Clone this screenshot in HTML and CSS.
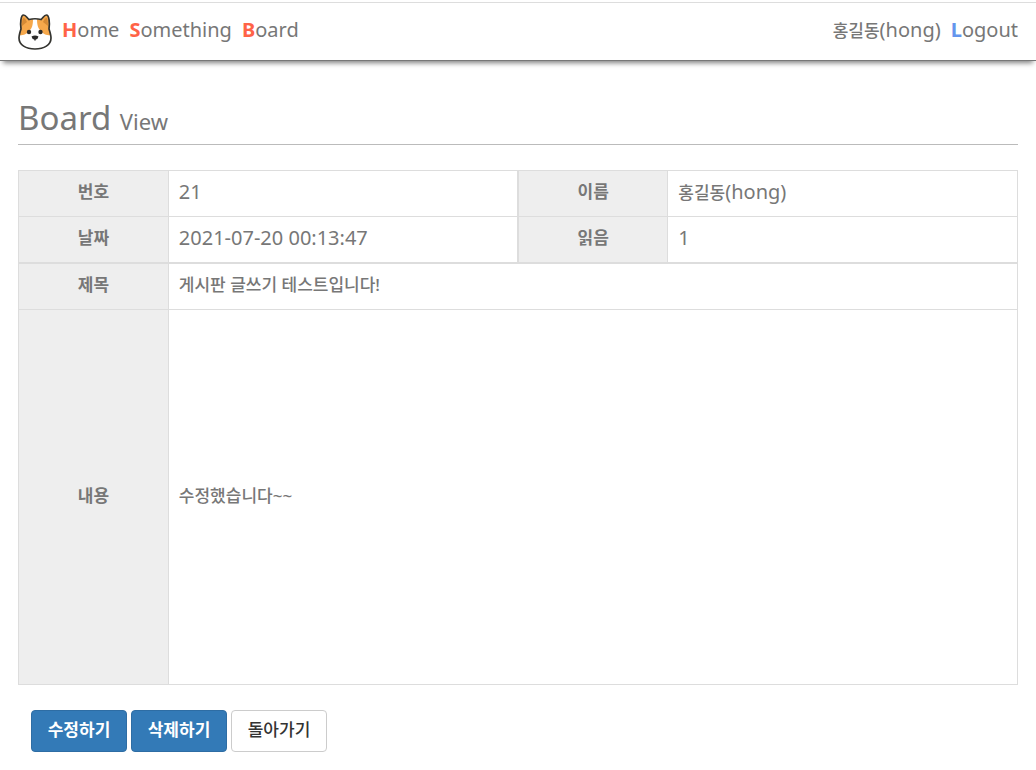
FILE: index.html
```html
<!DOCTYPE html>
<html lang="ko">
<head>
  <meta charset="utf-8">
  <meta name="viewport" content="width=device-width, initial-scale=1">
  <title>Board View</title>
  <link rel="stylesheet" href="styles.css">
</head>
<body>
  <header class="navbar">
    <nav class="nav-links">
      <a class="logo" href="#" aria-label="Main">
        <svg viewBox="0 0 34 36" width="34" height="36" aria-hidden="true">
          <path fill="#fff" d="M3 15 C2 9 3 1 5.500 1 C8 1 9 4 11 5.500 C15 4.500 19 4.500 23 5.500 C25 4 26 1 28.500 1 C31 1 32 9 31 15 C32 18 33 21 33 24 C33 31 26 35 17 35 C8 35 1 31 1 24 C1 21 2 18 3 15Z"/>
          <path fill="#f6a84b" d="M3 14 C2 8 3 1 5.500 1 C8 1 9 4 11 5.500 L15 5 C15 11 14 14 12 16 C10 19 6 22 1.500 21 C1.500 19 2 17 3 14Z M31 14 C32 8 31 1 28.500 1 C26 1 25 4 23 5.500 L19 5 C19 11 20 14 22 16 C24 19 28 22 32.500 21 C32.500 19 32 17 31 14Z"/>
          <path fill="#d58a35" d="M4 12 C4 8 4.500 4 5.500 4 C7 4 8 6 9 8Z M30 12 C30 8 29.500 4 28.500 4 C27 4 26 6 25 8Z"/>
          <path fill="none" stroke="#343430" stroke-width="1.700" d="M3 15 C2 9 3 1 5.500 1 C8 1 9 4 11 5.500 C15 4.500 19 4.500 23 5.500 C25 4 26 1 28.500 1 C31 1 32 9 31 15 C32 18 33 21 33 24 C33 31 26 35 17 35 C8 35 1 31 1 24 C1 21 2 18 3 15Z"/>
          <circle cx="11" cy="18" r="2.200" fill="#2b2b2b"/>
          <circle cx="22.500" cy="18" r="2.200" fill="#2b2b2b"/>
          <path fill="#2b2b2b" d="M13.500 22.500 Q17 20.500 20.500 22.500 Q20 25 17.700 25.500 L17.700 26.500 H16.300 L16.300 25.500 Q14 25 13.500 22.500Z"/>
        </svg>
      </a>
      <a class="nav-link" href="#"><b class="initial">H</b>ome</a>
      <a class="nav-link" href="#"><b class="initial">S</b>omething</a>
      <a class="nav-link" href="#"><b class="initial">B</b>oard</a>
    </nav>
    <div class="nav-links">
      <span class="user"><span class="ko">홍길동</span>(hong)</span>
      <a class="nav-link" href="#"><b class="initial initial-blue">L</b>ogout</a>
    </div>
  </header>

  <main class="content">
    <h1 class="page-title">Board <small class="subtitle">View</small></h1>

    <table class="post">
      <colgroup>
        <col class="col-label"><col class="col-value"><col class="col-label"><col class="col-value">
      </colgroup>
      <tbody>
        <tr>
          <th scope="row">번호</th>
          <td>21</td>
          <th scope="row" class="split">이름</th>
          <td><span class="ko">홍길동</span>(hong)</td>
        </tr>
        <tr>
          <th scope="row">날짜</th>
          <td>2021-07-20 00:13:47</td>
          <th scope="row" class="split">읽음</th>
          <td>1</td>
        </tr>
        <tr class="subject">
          <th scope="row">제목</th>
          <td colspan="3"><span class="ko">게시판 글쓰기 테스트입니다!</span></td>
        </tr>
        <tr class="body">
          <th scope="row">내용</th>
          <td colspan="3"><span class="ko">수정했습니다~~</span></td>
        </tr>
      </tbody>
    </table>

    <div class="actions">
      <button type="button" class="btn btn-primary">수정하기</button>
      <button type="button" class="btn btn-primary">삭제하기</button>
      <button type="button" class="btn btn-default">돌아가기</button>
    </div>
  </main>
</body>
</html>
```
FILE: styles.css
```css
* {
  box-sizing: border-box;
}

body {
  margin: 0;
  padding-top: 2px;
  background: #fff;
  color: #777;
  font-family: "Noto Sans", "Noto Sans CJK KR", sans-serif;
  font-size: 20px;
  line-height: 24px;
}

a {
  color: inherit;
  text-decoration: none;
}

.ko {
  font-size: 17px;
  font-weight: 500;
}

.navbar {
  display: flex;
  justify-content: space-between;
  align-items: center;
  height: 59px;
  padding: 0 18px;
  border-top: 1px solid #ddd;
  border-bottom: 1px solid #777;
  box-shadow: 0 5px 5px -3px rgba(0, 0, 0, 0.5);
}

.nav-links {
  display: flex;
  align-items: center;
  gap: 10px;
}

.nav-link,
.user {
  padding-bottom: 3px;
}

.logo svg {
  display: block;
}

.initial {
  color: #ff6347;
}

.initial-blue {
  color: #6495ed;
}

.content {
  padding: 36px 18px 18px;
}

.page-title {
  margin: 0 0 25px;
  padding-bottom: 2px;
  border-bottom: 1px solid #bbb;
  font-size: 33px;
  font-weight: 400;
  line-height: 41px;
}

.subtitle {
  font-size: 22px;
}

.post {
  width: 100%;
  table-layout: fixed;
  border-collapse: collapse;
}

.col-label {
  width: 15%;
}

.col-value {
  width: 35%;
}

.post th,
.post td {
  height: 46px;
  padding: 8px 10px 11px;
  border: 1px solid #ddd;
  text-align: left;
}

.post th {
  background: #eee;
  font-size: 17px;
  text-align: center;
}

.post .split {
  border-left-width: 2px;
}

.post .subject th,
.post .subject td {
  height: 47px;
  border-top-width: 2px;
}

.post .body th,
.post .body td {
  height: 375px;
}

.actions {
  display: flex;
  gap: 4px;
  padding: 25px 13px 0;
}

.btn {
  min-width: 96px;
  padding: 7px 12px 9px;
  border: 1px solid #ccc;
  border-radius: 4px;
  background: #fff;
  color: #333;
  font-family: inherit;
  font-size: 17px;
  font-weight: 500;
  line-height: 24px;
}

.btn-primary {
  border-color: #2e6da4;
  background: #337ab7;
  color: #fff;
  font-weight: 700;
}
```
